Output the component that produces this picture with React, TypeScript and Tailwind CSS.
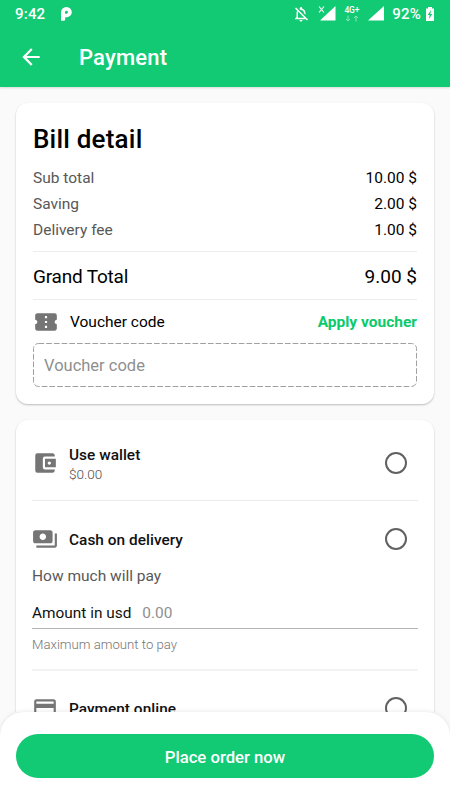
import type { ReactNode } from "react";
import {
  MdAccountBalanceWallet,
  MdArrowBack,
  MdConfirmationNumber,
  MdCreditCard,
  MdOutlineNotificationsOff,
  MdPayments,
} from "react-icons/md";

const billRows = [
  { label: "Sub total", value: "10.00 $" },
  { label: "Saving", value: "2.00 $" },
  { label: "Delivery fee", value: "1.00 $" },
];

function StatusBar() {
  return (
    <div className="flex h-7 items-center justify-between pl-[15px] pr-4">
      <div className="flex items-center">
        <span className="w-[46px] text-[15px] leading-7 font-medium tracking-[0.2px]">9:42</span>
        <svg className="mb-px h-[14px] w-[11px]" viewBox="0 0 11 14">
          <path
            d="M0 13.7V5.4A5.4 5.4 0 0 1 5.4 0 5.3 5.2 0 0 1 10.8 5.2 5.2 5.2 0 0 1 5.6 10.3L4.2 10.3V12.2A1.5 1.5 0 0 1 2.7 13.7ZM4.2 6.8H5.4A1.5 1.5 0 1 0 4 5.3Z"
            fill="white"
            fillRule="evenodd"
          />
        </svg>
      </div>
      <div className="flex items-center">
        <MdOutlineNotificationsOff className="mr-2 mb-px size-[18px]" />
        <svg className="mr-2 h-4 w-[18px]" viewBox="0 0 18 16">
          <path d="M17.5 0V14.5H2Z" fill="white" />
          <path d="M1 0.5L6 6.5M6 0.5L1 6.5" stroke="white" strokeWidth="1.1" />
        </svg>
        <div className="mr-[9px] mb-px flex w-[15px] flex-col items-center">
          <span className="text-[8.5px] leading-[9px] font-medium tracking-[-0.2px]">4G+</span>
          <svg className="h-[7px] w-[14px] opacity-50" viewBox="0 0 14 7">
            <path d="M3 0.5V6M1 4L3 6L5 4M11 6.5V1M9 3L11 1L13 3" fill="none" stroke="white" />
          </svg>
        </div>
        <svg className="mr-2 h-4 w-4" viewBox="0 0 16 16">
          <path d="M16 0V14.5H0Z" fill="white" />
        </svg>
        <span className="mr-[5px] text-[15px] leading-7 font-medium tracking-[0.2px]">92%</span>
        <svg className="mb-px h-[14px] w-2" viewBox="0 0 8 14">
          <path d="M2 0H6V1.5H8V14H0V1.5H2Z" fill="white" />
          <path d="M5 3L1.7 8H3.6L3 12L6.3 7H4.4Z" fill="#12ca73" />
        </svg>
      </div>
    </div>
  );
}

function Radio() {
  return <span className="mr-[11px] size-[22px] rounded-full border-2 border-[#616161]" />;
}

function Method({ icon, title, note }: { icon: ReactNode; title: string; note?: string }) {
  return (
    <div className="flex h-[26px] items-center">
      <span className="mr-[11px] text-[26px] text-[#757575]">{icon}</span>
      <div className="flex-1">
        <p className="pt-px text-[15.4px] leading-5 font-[470] tracking-[0.03px] text-[#111]">{title}</p>
        {note && <p className="text-[13.5px] leading-[18px] font-light text-[#4c4c4c]">{note}</p>}
      </div>
      <Radio />
    </div>
  );
}

export default function App() {
  return (
    <div className="flex h-[800px] w-[450px] flex-col overflow-hidden bg-[#fafafa] font-['Roboto',sans-serif]">
      <header className="z-10 h-[87px] shrink-0 bg-[#12ca73] text-white shadow-[0_1px_2px_rgba(0,0,0,0.12)]">
        <StatusBar />
        <div className="flex h-[59px] items-center pl-[18px]">
          <MdArrowBack className="mb-px size-[26px]" />
          <h1 className="ml-[35px] pt-px text-[22px] leading-7 font-medium tracking-[0.2px]">Payment</h1>
        </div>
      </header>

      <main className="h-[625px] shrink-0 overflow-hidden px-4 pt-4">
        <section className="h-[301px] rounded-[12px] bg-white px-[17px] pt-5 shadow-[0_1px_2px_rgba(0,0,0,0.25)]">
          <h2 className="text-[26px] leading-8 font-[470] tracking-[0.2px] text-black">Bill detail</h2>
          <dl className="mt-[11px]">
            {billRows.map((row) => (
              <div key={row.label} className="flex h-[26px] items-center justify-between text-[15.5px] font-[430]">
                <dt className="text-[#585858]">{row.label}</dt>
                <dd className="text-black">{row.value}</dd>
              </div>
            ))}
          </dl>
          <div className="mt-[7px] flex h-[49px] items-center justify-between border-y border-[#ededed] pt-[3px] text-[19px] font-[430] text-black">
            <span className="tracking-[-0.2px]">Grand Total</span>
            <span>9.00 $</span>
          </div>
          <div className="mt-[9px] flex h-[26px] items-center">
            <MdConfirmationNumber className="mr-[11px] size-[26px] text-[#757575]" />
            <span className="flex-1 pt-[2px] text-[15.5px] text-black">Voucher code</span>
            <span className="pt-[2px] text-[15.5px] font-bold text-[#0bca6b]">Apply voucher</span>
          </div>
          <div className="relative mt-2 flex h-11 items-center pt-[2px] pl-[11px]">
            <svg className="absolute inset-0 h-11 w-full" fill="none">
              <rect x="0.5" y="0.5" width="383" height="43" rx="5" stroke="#a0a0a0" strokeDasharray="5.7 2" />
            </svg>
            <span className="text-[16.5px] text-[#8f8f8f]">Voucher code</span>
          </div>
        </section>

        <section className="mt-4 h-[400px] rounded-[12px] bg-white px-4 pt-[30px] shadow-[0_1px_2px_rgba(0,0,0,0.25)]">
          <Method icon={<MdAccountBalanceWallet />} title="Use wallet" note="$0.00" />
          <div className="mt-6 border-t border-[#ebebeb]" />
          <div className="mt-[25px]">
            <Method icon={<MdPayments />} title="Cash on delivery" />
          </div>
          <p className="mt-[14px] text-[15.5px] leading-5 font-[430] text-[#585858]">How much will pay</p>
          <div className="mt-[14px] flex h-[29px] items-center border-b border-[#b5b5b5] text-[15.4px]">
            <span className="text-[#111]">Amount in usd</span>
            <span className="ml-[11px] text-[#8f8f8f]">0.00</span>
          </div>
          <p className="mt-[6px] text-[13.2px] leading-5 font-light text-[#757575]">Maximum amount to pay</p>
          <div className="mt-[14px] border-t-2 border-[#f3f3f3]" />
          <div className="mt-6">
            <Method icon={<MdCreditCard />} title="Payment online" />
          </div>
        </section>
      </main>

      <footer className="z-10 h-[88px] shrink-0 rounded-t-[24px] bg-white px-4 pt-[22px] shadow-[0_0_5px_rgba(0,0,0,0.1)]">
        <button className="h-11 w-full rounded-full bg-[#12ca73] pt-[3px] text-[16.7px] font-medium text-white">
          Place order now
        </button>
      </footer>
    </div>
  );
}
